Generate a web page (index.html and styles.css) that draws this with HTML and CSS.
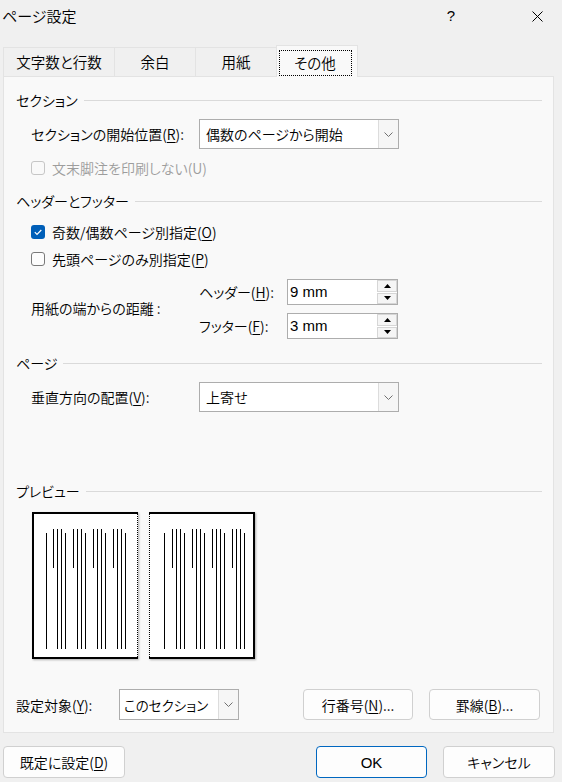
FILE: index.html
```html
<!DOCTYPE html>
<html lang="ja">
  <head>
    <meta charset="UTF-8" />
    <meta name="viewport" content="width=device-width, initial-scale=1.0" />
    <title>ページ設定</title>
    <link rel="stylesheet" href="styles.css">
  </head>
  <body>
    <div class="dialog">
      <!-- タイトルバー -->
      <div class="titlebar">
        <span class="title">ページ設定</span>
        <span class="help">?</span>
        <span class="close">
          <svg width="11" height="11" viewBox="0 0 11 11"><path d="M0.5 0.5L10.5 10.5M10.5 0.5L0.5 10.5" stroke="#000" stroke-width="1" fill="none"/></svg>
        </span>
      </div>

      <!-- タブ -->
      <div class="tabs">
        <div class="tab t1">文字数と行数</div>
        <div class="tab t2">余白</div>
        <div class="tab t3">用紙</div>
        <div class="tab active"><span class="focus">その他</span></div>
      </div>

      <div class="panel">
        <!-- セクション -->
        <div class="group first"><span>セクション</span></div>
        <div class="row select-row">
          <span class="label">セクションの開始位置(<u>R</u>):</span>
          <div class="select wide">
            <span class="value">偶数のページから開始</span>
            <span class="drop"><svg width="9" height="5" viewBox="0 0 9 5"><path d="M0.5 0.5L4.5 4.5L8.5 0.5" stroke="#707070" fill="none"/></svg></span>
          </div>
        </div>
        <div class="row check-row disabled-row">
          <span class="box disabled"></span>
          <span>文末脚注を印刷しない(U)</span>
        </div>

        <!-- ヘッダーとフッター -->
        <div class="group second"><span>ヘッダーとフッター</span></div>
        <div class="row check-row cb1">
          <span class="box checked">
            <svg width="14" height="14" viewBox="0 0 14 14"><path d="M3.8 7.2L6 9.4L10.3 5" stroke="#fff" stroke-width="1.2" fill="none"/></svg>
          </span>
          <span>奇数/偶数ページ別指定(<u>O</u>)</span>
        </div>
        <div class="row check-row cb2">
          <span class="box"></span>
          <span>先頭ページのみ別指定(<u>P</u>)</span>
        </div>
        <div class="row distance">
          <span class="label dist-label">用紙の端からの距離 :</span>
          <div class="spins">
            <div class="spin-row">
              <span class="spin-label">ヘッダー(<u>H</u>):</span>
              <div class="spinner">
                <span class="value">9 mm</span>
                <span class="arrows">
                  <span class="arrow"><svg width="7" height="4" viewBox="0 0 7 4"><path d="M0 4L3.5 0L7 4Z" fill="#000"/></svg></span>
                  <span class="arrow"><svg width="7" height="4" viewBox="0 0 7 4"><path d="M0 0L3.5 4L7 0Z" fill="#000"/></svg></span>
                </span>
              </div>
            </div>
            <div class="spin-row">
              <span class="spin-label">フッター(<u>F</u>):</span>
              <div class="spinner">
                <span class="value">3 mm</span>
                <span class="arrows">
                  <span class="arrow"><svg width="7" height="4" viewBox="0 0 7 4"><path d="M0 4L3.5 0L7 4Z" fill="#000"/></svg></span>
                  <span class="arrow"><svg width="7" height="4" viewBox="0 0 7 4"><path d="M0 0L3.5 4L7 0Z" fill="#000"/></svg></span>
                </span>
              </div>
            </div>
          </div>
        </div>

        <!-- ページ -->
        <div class="group third"><span>ページ</span></div>
        <div class="row select-row">
          <span class="label">垂直方向の配置(<u>V</u>):</span>
          <div class="select wide">
            <span class="value">上寄せ</span>
            <span class="drop"><svg width="9" height="5" viewBox="0 0 9 5"><path d="M0.5 0.5L4.5 4.5L8.5 0.5" stroke="#707070" fill="none"/></svg></span>
          </div>
        </div>

        <!-- プレビュー -->
        <div class="group fourth"><span>プレビュー</span></div>
        <div class="preview">
          <svg class="page" width="106" height="147" viewBox="0 0 106 147">
            <rect x="0" y="0" width="106" height="147" fill="#fff"/>
            <path d="M1 0V147M0 1H106M0 146H106" stroke="#000" stroke-width="2" fill="none"/>
            <path d="M105.5 0V147" stroke="#000" stroke-width="1" stroke-dasharray="1 1" fill="none"/>
            <g stroke="#000" stroke-width="1">
              <path d="M14.5 21V137"/>
              <path d="M21.5 17V56M25.5 17V137M29.5 17V137M33.5 21V137"/>
              <path d="M41.5 17V56M45.5 17V137M49.5 17V137M53.5 21V137"/>
              <path d="M61.5 17V56M65.5 17V137M69.5 17V137M73.5 21V137"/>
              <path d="M81.5 17V56M85.5 17V137M89.5 17V137M93.5 21V137"/>
            </g>
          </svg>
          <svg class="page" width="106" height="147" viewBox="0 0 106 147">
            <rect x="0" y="0" width="106" height="147" fill="#fff"/>
            <path d="M105 0V147M0 1H106M0 146H106" stroke="#000" stroke-width="2" fill="none"/>
            <path d="M0.5 0V147" stroke="#000" stroke-width="1" stroke-dasharray="1 1" fill="none"/>
            <g stroke="#000" stroke-width="1">
              <path d="M15.5 21V137"/>
              <path d="M23.5 17V56M27.5 17V137M31.5 17V137M35.5 21V137"/>
              <path d="M43.5 17V56M47.5 17V137M51.5 17V137M55.5 21V137"/>
              <path d="M63.5 17V56M67.5 17V137M71.5 17V137M75.5 21V137"/>
              <path d="M83.5 17V56M87.5 17V137M91.5 17V137M95.5 21V137"/>
            </g>
          </svg>
        </div>

        <!-- 設定対象 -->
        <div class="apply-row">
          <span class="apply-label">設定対象(<u>Y</u>):</span>
          <div class="select narrow">
            <span class="value">このセクション</span>
            <span class="drop"><svg width="9" height="5" viewBox="0 0 9 5"><path d="M0.5 0.5L4.5 4.5L8.5 0.5" stroke="#707070" fill="none"/></svg></span>
          </div>
          <button class="btn line-btn">行番号(<u>N</u>)...</button>
          <button class="btn border-btn">罫線(<u>B</u>)...</button>
        </div>
      </div>

      <!-- 下部ボタン -->
      <div class="footer">
        <button class="btn default-btn">既定に設定(<u>D</u>)</button>
        <button class="btn ok-btn">OK</button>
        <button class="btn cancel-btn">キャンセル</button>
      </div>
    </div>
  </body>
</html>
```

FILE: styles.css
```css
body {
  margin: 0;
  padding: 0;
  background: #f0f0f0;
}
.dialog {
  width: 562px;
  height: 782px;
  background: #f0f0f0;
  font-family: "Noto Sans CJK JP", "Noto Sans", sans-serif;
  font-feature-settings: "palt" 1;
  font-size: 14px;
  font-weight: 350;
  line-height: 20px;
  color: #000;
  overflow: hidden;
}
u {
  text-underline-offset: 2px;
  text-decoration-thickness: 1px;
}

/* タイトルバー */
.titlebar {
  height: 32px;
  display: flex;
  align-items: center;
  padding-left: 2px;
  padding-right: 2px;
  font-size: 15px;
}
.title {
  flex: 1;
}
.help {
  width: 46px;
  text-align: center;
  margin-right: 40px;
  font-family: "Liberation Sans", sans-serif;
}
.close {
  width: 46px;
  display: flex;
  justify-content: center;
}

/* タブ */
.tabs {
  height: 31px;
  padding-left: 3px;
  display: flex;
  align-items: flex-end;
  margin-top: 13px;
  font-size: 14.5px;
}
.tab {
  box-sizing: border-box;
  height: 29px;
  display: flex;
  align-items: center;
  justify-content: center;
  border-top: 1px solid #e3e3e3;
  border-left: 1px solid #e3e3e3;
  background: #f0f0f0;
}
.t1 { width: 111px; }
.t2 { width: 81px; }
.t3 { width: 81px; }
.tab.active {
  width: 82px;
  height: 32px;
  margin-bottom: -1px;
  background: #f9f9f9;
  border: 1px solid #e3e3e3;
  border-bottom: none;
  position: relative;
  z-index: 1;
}
.focus {
  box-sizing: border-box;
  width: 73px;
  height: 26px;
  margin-top: 3px;
  margin-right: 4px;
  border: 1px dotted #000;
  display: flex;
  align-items: center;
  justify-content: center;
}

/* パネル */
.panel {
  box-sizing: border-box;
  width: 551px;
  height: 657px;
  margin-left: 3px;
  background: #f9f9f9;
  border: 1px solid #e3e3e3;
  padding: 0 11px 0 12px;
}
.group {
  height: 20px;
  display: flex;
  align-items: center;
  gap: 6px;
}
.group::after {
  content: "";
  flex: 1;
  height: 1px;
  background: #dadada;
}
.group.first { margin-top: 13px; }
.group.second { margin-top: 13px; }
.group.third { margin-top: 14px; }
.group.fourth { margin-top: 69px; }

.row {
  display: flex;
  align-items: center;
  padding-left: 15px;
}
.label {
  width: 168px;
  flex: none;
}
.select-row {
  margin-top: 9px;
  height: 30px;
}
.select {
  box-sizing: border-box;
  display: flex;
  align-items: center;
  background: #fff;
  border: 1px solid #adadad;
}
.select.wide {
  width: 200px;
  height: 30px;
}
.select .value {
  flex: 1;
  padding-left: 6px;
}
.drop {
  width: 19px;
  align-self: stretch;
  display: flex;
  align-items: center;
  justify-content: center;
  background: #f6f6f6;
  border-left: 1px solid #dcdcdc;
}

/* チェックボックス */
.check-row {
  height: 20px;
  gap: 7px;
}
.disabled-row {
  margin-top: 9px;
  color: #9d9d9d;
}
.cb1 { margin-top: 11px; }
.cb2 { margin-top: 7px; }
.box {
  box-sizing: border-box;
  width: 14px;
  height: 14px;
  border: 1px solid #7a7a7a;
  border-radius: 3px;
  background: #fdfdfd;
  flex: none;
}
.box.disabled {
  border-color: #c6c6c6;
  background: #f9f9f9;
}
.box.checked {
  border: none;
  background: #005fb8;
}
.box.checked svg {
  display: block;
}

/* 距離 */
.distance {
  margin-top: 10px;
  height: 60px;
}
.dist-label {
  padding-bottom: 2px;
}
.spins {
  display: flex;
  flex-direction: column;
  gap: 8px;
}
.spin-row {
  display: flex;
  align-items: center;
  height: 26px;
}
.spin-label {
  width: 88px;
}
.spinner {
  box-sizing: border-box;
  width: 111px;
  height: 26px;
  background: #fff;
  border: 1px solid #adadad;
  display: flex;
  align-items: center;
}
.spinner .value {
  flex: 1;
  padding-left: 2px;
  font-size: 15px;
  font-family: "Liberation Sans", "Noto Sans CJK JP", sans-serif;
}
.arrows {
  display: flex;
  flex-direction: column;
  gap: 1px;
  width: 20px;
  align-self: stretch;
}
.arrow {
  box-sizing: border-box;
  flex: 1;
  display: flex;
  align-items: center;
  justify-content: center;
  background: #f5f5f5;
  border: 1px solid #d6d6d6;
}

/* プレビュー */
.preview {
  margin-top: 11px;
  height: 147px;
  padding-left: 16px;
  display: flex;
  gap: 11px;
}
.page {
  display: block;
  box-shadow: 1px 1px 2px rgba(0, 0, 0, 0.3);
}

/* 設定対象 */
.apply-row {
  margin-top: 30px;
  height: 31px;
  display: flex;
  align-items: center;
}
.apply-label {
  width: 103px;
}
.select.narrow {
  width: 120px;
  height: 31px;
}
.select.narrow .value {
  padding-left: 4px;
  font-size: 13.5px;
}
.btn {
  box-sizing: border-box;
  height: 31px;
  background: #fdfdfd;
  border: 1px solid #d0d0d0;
  border-radius: 4px;
  font-family: inherit;
  font-feature-settings: "palt" 1;
  font-size: 14px;
  font-weight: 350;
  color: #000;
  padding: 0;
}
.line-btn {
  width: 110px;
  margin-left: 64px;
}
.border-btn {
  width: 111px;
  margin-left: 16px;
}

/* 下部ボタン */
.footer {
  margin-top: 13px;
  padding: 0 7px 0 3px;
  display: flex;
}
.footer .btn {
  height: 32px;
}
.default-btn {
  width: 122px;
}
.ok-btn {
  width: 111px;
  margin-left: auto;
  border-color: #0067c0;
  font-family: "Liberation Sans", sans-serif;
  font-size: 15px;
}
.cancel-btn {
  width: 112px;
  margin-left: 16px;
}
```
